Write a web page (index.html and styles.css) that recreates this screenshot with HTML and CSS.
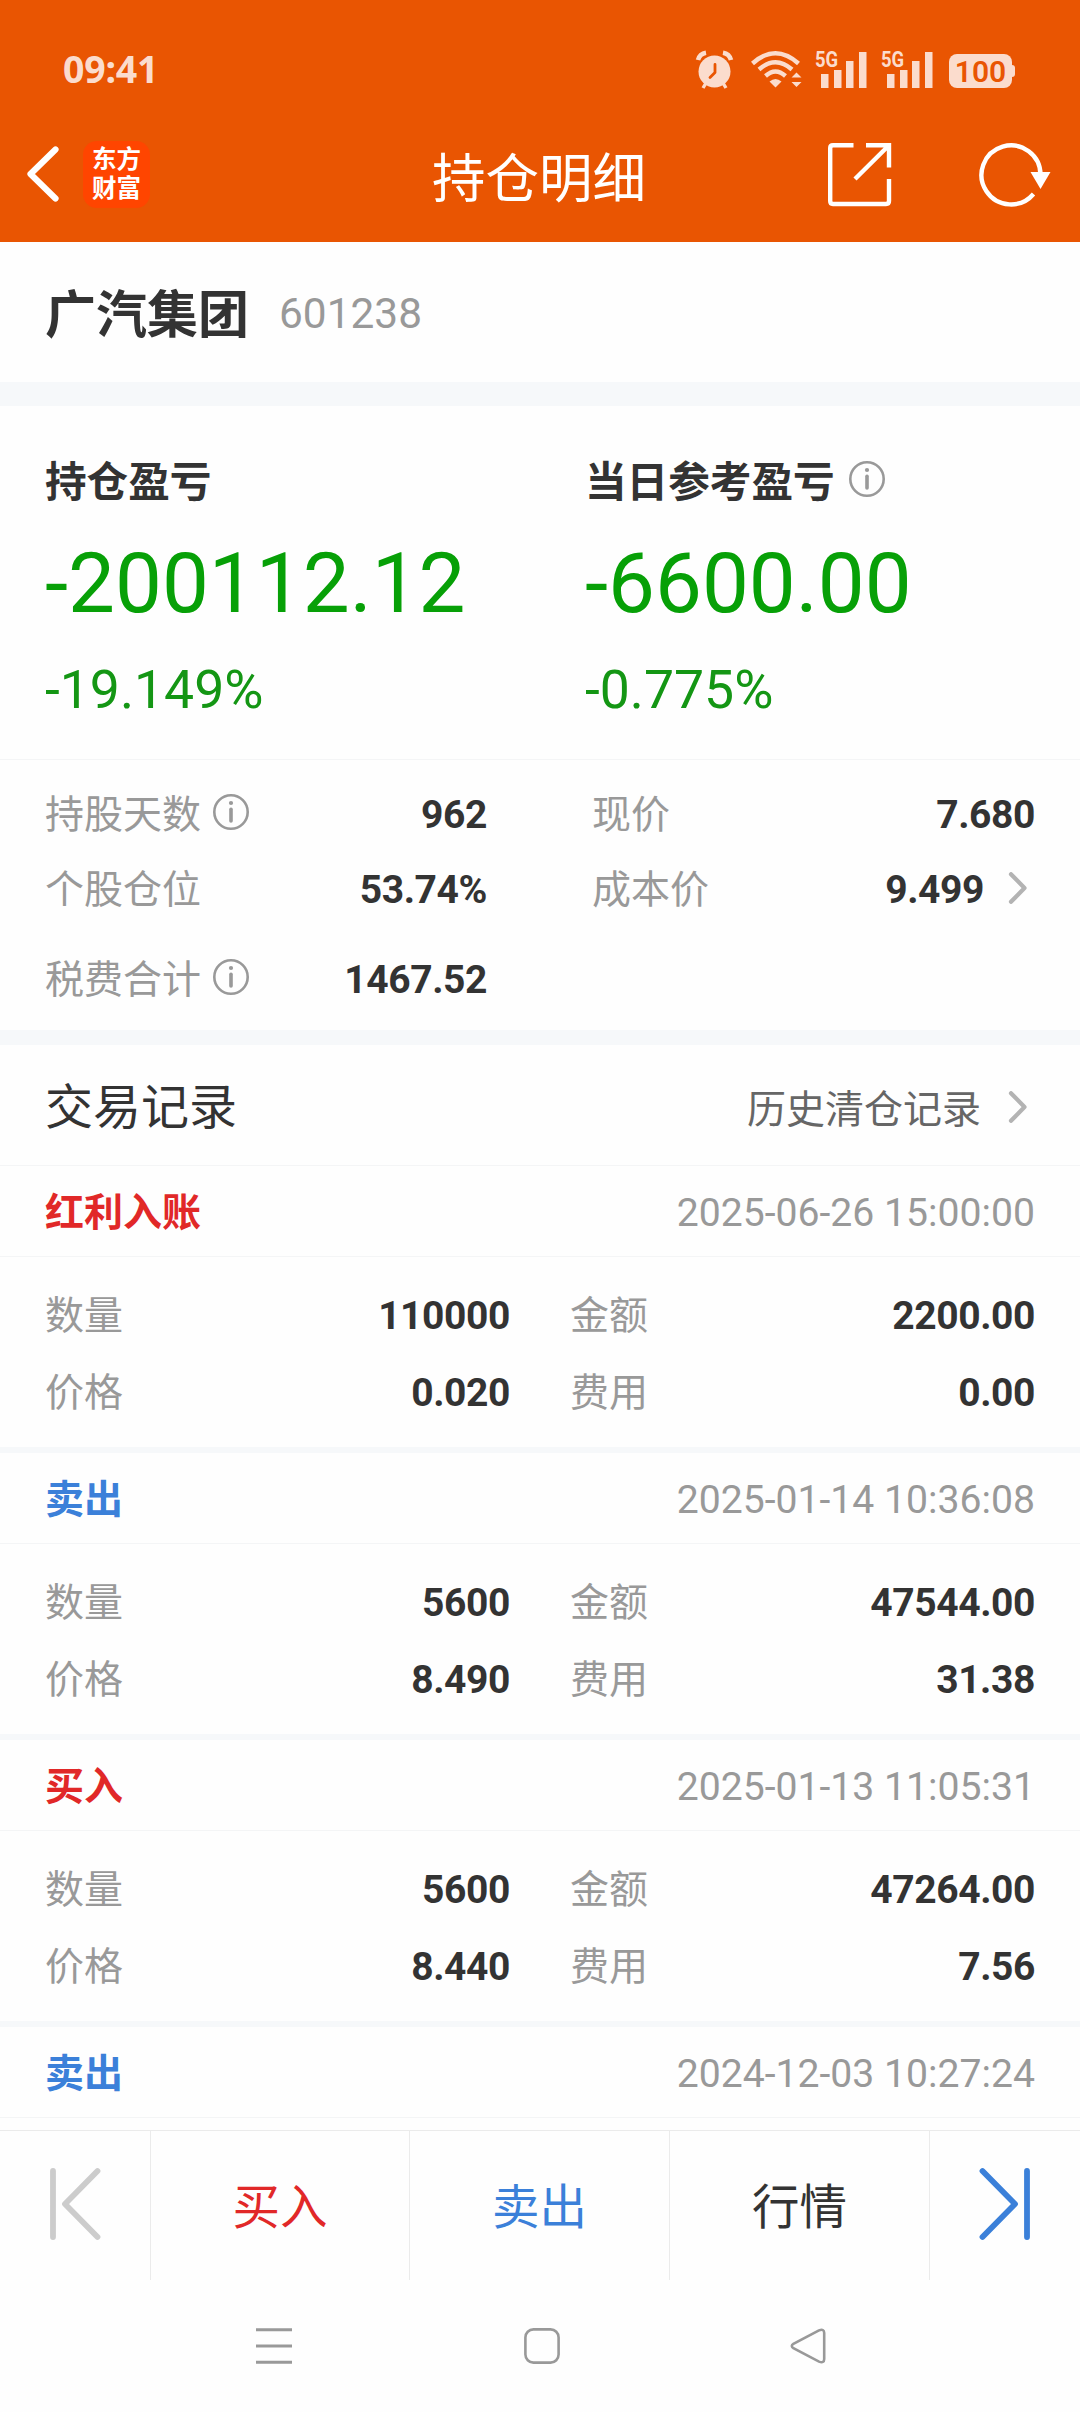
FILE: index.html
```html
<!DOCTYPE html>
<html lang="zh-CN">
<head>
<meta charset="utf-8">
<title>持仓明细</title>
<link rel="stylesheet" href="styles.css">
</head>
<body>
<svg class="symbols" aria-hidden="true">
  <symbol id="info" viewBox="0 0 36 36">
    <circle cx="18" cy="18" r="16.7" fill="none" stroke="#999" stroke-width="2.6"/>
    <circle cx="18" cy="9" r="2.1" fill="#999"/>
    <path d="M18 15.3V27" stroke="#999" stroke-width="3.6" stroke-linecap="round"/>
  </symbol>
  <symbol id="chevron" viewBox="0 0 20 32">
    <path d="M3 2.2 16.5 16 3 29.8" fill="none" stroke="#b3b3b3" stroke-width="4.2" stroke-linecap="round" stroke-linejoin="round"/>
  </symbol>
  <symbol id="signal" viewBox="0 0 46 36">
    <path d="M0 22h7.5v14H0zM13 18h7.5v18H13zM25 9h7.5v27H25zM38 0h7.5v36H38z" fill="#fbdccd"/>
  </symbol>
</svg>
<div class="page">
  <header class="header">
    <div class="status">
      <span class="clock">09:41</span>
      <div class="status-icons">
        <svg class="alarm" viewBox="0 0 38 38">
          <circle cx="18.5" cy="20.5" r="16" fill="#fbdccd"/>
          <path d="M2 9A10 10 0 0 1 10 1.8M35 9A10 10 0 0 0 27 1.8" fill="none" stroke="#fbdccd" stroke-width="4.6"/>
          <path d="M10 32l-3 5M27 32l3 5" stroke="#fbdccd" stroke-width="3.4"/>
          <path d="M19 13.5v8l-5 5" fill="none" stroke="#e95502" stroke-width="2.8" stroke-linecap="round" stroke-linejoin="round"/>
        </svg>
        <svg class="wifi" viewBox="0 0 51 37">
          <path d="M1.500 12.500Q24.500-8 47.500 12.500M8 18.500Q24.500 4 41 18.500M14.500 25Q24.500 16 34.500 25" fill="none" stroke="#fbdccd" stroke-width="4.400"/>
          <path d="M18.500 30.500Q24.500 25.500 30.500 30.500L24.500 36.500z" fill="#fbdccd"/>
          <path d="M40.500 26.500 45.500 21.500 50.500 26.500zM40.500 31 45.500 36 50.500 31z" fill="#fbdccd"/>
        </svg>
        <div class="cell"><span class="net">5G</span><svg class="bars"><use href="#signal"/></svg></div>
        <div class="cell"><span class="net">5G</span><svg class="bars"><use href="#signal"/></svg></div>
        <div class="battery"><span class="level">100</span></div>
      </div>
    </div>
    <nav class="navbar">
      <div class="nav-left">
        <svg class="back" viewBox="0 0 34 56"><path d="M29.500 3.500 4.500 28 29.500 52.500" fill="none" stroke="#fff" stroke-width="6.200" stroke-linecap="round" stroke-linejoin="round"/></svg>
        <div class="logo"><span>东方</span><span>财富</span></div>
      </div>
      <h1 class="title">持仓明细</h1>
      <div class="nav-right">
        <svg class="share" viewBox="0 0 64 64" fill="none" stroke="#fff" stroke-width="4.400">
          <path d="M25.500 2.200H5Q2.200 2.200 2.200 5V58Q2.200 61 5 61H58Q61 61 61 58V36"/>
          <path d="M38 2.200H61V24.500M60 3.200 27 36"/>
        </svg>
        <svg class="refresh" viewBox="0 0 72 64">
          <path d="M61.500 32A29.500 29.500 0 1 0 54.500 51" fill="none" stroke="#fff" stroke-width="4.400"/>
          <path d="M51.500 29h20L61.500 46z" fill="#fff"/>
        </svg>
      </div>
    </nav>
  </header>

  <section class="stock"><h2 class="name">广汽集团</h2><span class="code">601238</span></section>

  <section class="profit">
    <div class="gain">
      <h3 class="gain-title">持仓盈亏</h3>
      <div class="amount">-200112.12</div>
      <div class="rate">-19.149%</div>
    </div>
    <div class="gain">
      <h3 class="gain-title">当日参考盈亏<svg class="info"><use href="#info"/></svg></h3>
      <div class="amount">-6600.00</div>
      <div class="rate">-0.775%</div>
    </div>
  </section>

  <section class="stats">
    <div class="stat"><span class="label">持股天数<svg class="info"><use href="#info"/></svg></span><b>962</b></div>
    <div class="stat"><span class="label">现价</span><b>7.680</b></div>
    <div class="stat"><span class="label">个股仓位</span><b>53.74%</b></div>
    <div class="stat"><span class="label">成本价</span><b>9.499</b><svg class="chevron"><use href="#chevron"/></svg></div>
    <div class="stat"><span class="label">税费合计<svg class="info"><use href="#info"/></svg></span><b>1467.52</b></div>
  </section>

  <section class="records-head">
    <h3 class="records-title">交易记录</h3>
    <a class="history">历史清仓记录<svg class="chevron"><use href="#chevron"/></svg></a>
  </section>

  <main class="records">
    <article class="record">
      <div class="record-head"><span class="kind buy">红利入账</span><time>2025-06-26 15:00:00</time></div>
      <div class="record-body">
        <div class="field"><span>数量</span><b>110000</b></div><div class="field"><span>金额</span><b>2200.00</b></div>
        <div class="field"><span>价格</span><b>0.020</b></div><div class="field"><span>费用</span><b>0.00</b></div>
      </div>
    </article>
    <article class="record">
      <div class="record-head"><span class="kind sell">卖出</span><time>2025-01-14 10:36:08</time></div>
      <div class="record-body">
        <div class="field"><span>数量</span><b>5600</b></div><div class="field"><span>金额</span><b>47544.00</b></div>
        <div class="field"><span>价格</span><b>8.490</b></div><div class="field"><span>费用</span><b>31.38</b></div>
      </div>
    </article>
    <article class="record">
      <div class="record-head"><span class="kind buy">买入</span><time>2025-01-13 11:05:31</time></div>
      <div class="record-body">
        <div class="field"><span>数量</span><b>5600</b></div><div class="field"><span>金额</span><b>47264.00</b></div>
        <div class="field"><span>价格</span><b>8.440</b></div><div class="field"><span>费用</span><b>7.56</b></div>
      </div>
    </article>
    <article class="record">
      <div class="record-head"><span class="kind sell">卖出</span><time>2024-12-03 10:27:24</time></div>
    </article>
  </main>

  <footer class="actions">
    <div class="action"><svg class="jump" viewBox="0 0 50 72" fill="none" stroke="#ccc" stroke-width="5.800" stroke-linecap="round" stroke-linejoin="round"><path d="M3 3V69M47.500 3 15 36 47.500 69"/></svg></div>
    <div class="action buy">买入</div>
    <div class="action sell">卖出</div>
    <div class="action">行情</div>
    <div class="action"><svg class="jump" viewBox="0 0 50 72" fill="none" stroke="#3b80d9" stroke-width="5.800" stroke-linecap="round" stroke-linejoin="round"><path d="M47 3V69M2.500 3 35 36 2.500 69"/></svg></div>
  </footer>

  <div class="system-nav">
    <svg viewBox="0 0 36 36" fill="none" stroke="#999" stroke-width="3"><path d="M0 1.700H36M0 18H36M0 34.300H36"/></svg>
    <svg viewBox="0 0 36 36" fill="none" stroke="#999" stroke-width="2.600"><rect x="1.400" y="1.400" width="33.200" height="33.200" rx="8"/></svg>
    <svg viewBox="2 0 36 36" fill="none" stroke="#999" stroke-width="2.600"><path d="M29 2.400 3.400 15.800Q.2 18 3.400 20.200L29 33.600Q34.200 35.600 34.200 31V5Q34.200.4 29 2.400z"/></svg>
  </div>
</div>
</body>
</html>
```
FILE: styles.css
```css
* { box-sizing: border-box; }

body {
  margin: 0;
  background: #fff;
  color: #333;
  font-family: Roboto, "Noto Sans CJK SC", sans-serif;
  font-size: 39px;
  line-height: 1.5;
}

h1, h2, h3 { margin: 0; font-weight: 400; }
svg { display: block; flex: none; overflow: visible; }
.symbols { position: absolute; width: 0; height: 0; }

.page {
  display: flex;
  flex-direction: column;
  width: 1080px;
  height: 2412px;
  overflow: hidden;
  background: #fefefe;
}
.page > * { flex: none; }

/* Status bar and title */
.header { height: 242px; background: #e95502; color: #fff; }

.status {
  display: flex;
  justify-content: space-between;
  height: 106px;
  padding: 51px 65px 0 63px;
  color: #fbdccd;
}
.clock {
  font: 700 37.5px/35px "Noto Sans", sans-serif;
  letter-spacing: -0.2px;
}
.status-icons { display: flex; height: 38px; }
.alarm { width: 38px; height: 38px; margin-right: 17px; }
.wifi { width: 51px; height: 37px; margin-right: 13px; }
.cell { display: flex; position: relative; width: 52px; margin-right: 14px; padding: 1px 0 0 6px; }
.bars { width: 46px; height: 36px; }
.net {
  position: absolute;
  left: 0;
  top: 0;
  font-size: 22.5px;
  line-height: 17px;
  font-weight: 700;
  transform: scaleX(0.82);
  transform-origin: left;
}
.battery {
  position: relative;
  width: 63px;
  height: 34px;
  margin: 3px 3px 0 2px;
  border-radius: 8px;
  background: #fbdccd;
  color: #e95502;
  text-align: center;
}
.battery::after {
  content: "";
  position: absolute;
  left: 63px;
  top: 11px;
  width: 3px;
  height: 12px;
  border-radius: 0 3px 3px 0;
  background: #fbdccd;
}
.level { display: block; font-size: 30px; line-height: 35px; font-weight: 600; }

.navbar {
  display: grid;
  grid-template-columns: 1fr auto 1fr;
  align-items: center;
  height: 136px;
  padding: 0 29px 0 26px;
}
.nav-left { display: flex; align-items: center; gap: 23px; }
.back { width: 34px; height: 56px; }
.logo {
  display: flex;
  flex-direction: column;
  align-items: center;
  width: 67px;
  height: 67px;
  padding-top: 4px;
  border-radius: 14px;
  background: #ff4500;
  font-size: 24.5px;
  line-height: 29px;
  font-weight: 700;
}
.title { font-size: 53.5px; line-height: 80px; padding: 11px 0 0 1px; }
.nav-right { display: flex; justify-content: flex-end; gap: 87px; padding-top: 1px; }
.share { width: 64px; height: 64px; }
.refresh { width: 72px; height: 64px; }

/* Stock name */
.stock {
  display: flex;
  align-items: center;
  gap: 30px;
  height: 164px;
  padding: 3px 45px 0;
  border-bottom: 24px solid #f6f8fa;
}
.name { font-size: 51px; line-height: 70px; font-weight: 700; padding-top: 4px; }
.code { font-size: 42.4px; color: #999; }

/* Profit and loss */
.profit {
  display: grid;
  grid-template-columns: 1fr 1fr;
  height: 354px;
  padding-top: 46px;
  border-bottom: 1px solid #f4f5f6;
}
.gain { padding-left: 45px; }
.gain-title {
  display: flex;
  font-size: 41.600px;
  line-height: 62px;
  font-weight: 700;
}
.gain-title .info { margin: 9px 0 0 14px; }
.info { width: 36px; height: 36px; }
.amount { color: #07a007; font-size: 83.5px; line-height: 140px; }
.rate { color: #149614; font-size: 53.5px; line-height: 72px; }

/* Position figures */
.stats {
  display: grid;
  grid-template-columns: 442px 443px;
  grid-template-rows: 75px 75px 105px;
  column-gap: 105px;
  height: 285px;
  padding: 17px 45px 0;
  border-bottom: 15px solid #f6f8fa;
}
.stat { display: flex; align-items: center; line-height: 60px; }
.label { display: flex; align-items: center; padding-top: 1px; color: #999; }
.label .info { margin: 0 0 6px 12px; }
.stat b { margin-left: auto; }
b { letter-spacing: -0.4px; }
.chevron { width: 20px; height: 32px; margin: 0 7px 4px 24px; }

/* Trade records */
.records-head {
  display: flex;
  align-items: center;
  justify-content: space-between;
  height: 121px;
  padding: 4px 45px 0;
  border-bottom: 1px solid #f4f5f6;
}
.records-title { font-size: 48px; line-height: 60px; padding-top: 1px; }
.history { display: flex; align-items: center; padding-top: 7px; color: #666; }
.history .chevron { margin: 0 7px 8px 27px; }

.records { height: 964px; overflow: hidden; }
.record { border-bottom: 6px solid #f6f8fa; }
.record:last-child { border-bottom: 0; }
.record-head {
  display: flex;
  align-items: center;
  justify-content: space-between;
  height: 91px;
  padding: 5px 45px 0;
  border-bottom: 1px solid #f4f5f6;
}
.record-head time { color: #999; font-size: 39.15px; }
.kind { font-weight: 700; }
.record-body {
  display: grid;
  grid-template-columns: 465px 465px;
  grid-auto-rows: 77px;
  column-gap: 60px;
  height: 190px;
  padding: 21px 45px 0;
}
.field { display: flex; align-items: center; justify-content: space-between; }
.field span { color: #999; }
.buy { color: #e12828; }
.sell { color: #3b80d9; }

/* Bottom actions */
.actions {
  display: grid;
  grid-template-columns: 151px 259px 260px 260px 150px;
  height: 150px;
  border-top: 1px solid #ebebeb;
  font-size: 47.500px;
}
.action {
  display: flex;
  align-items: center;
  justify-content: center;
  padding-top: 7px;
  border-right: 1px solid #ebebeb;
}
.action:last-child { border-right: 0; }
.jump { width: 50px; height: 72px; margin-bottom: 11px; }

.system-nav { display: flex; gap: 232px; padding: 48px 0 0 256px; }
.system-nav svg { width: 36px; height: 36px; }
```
